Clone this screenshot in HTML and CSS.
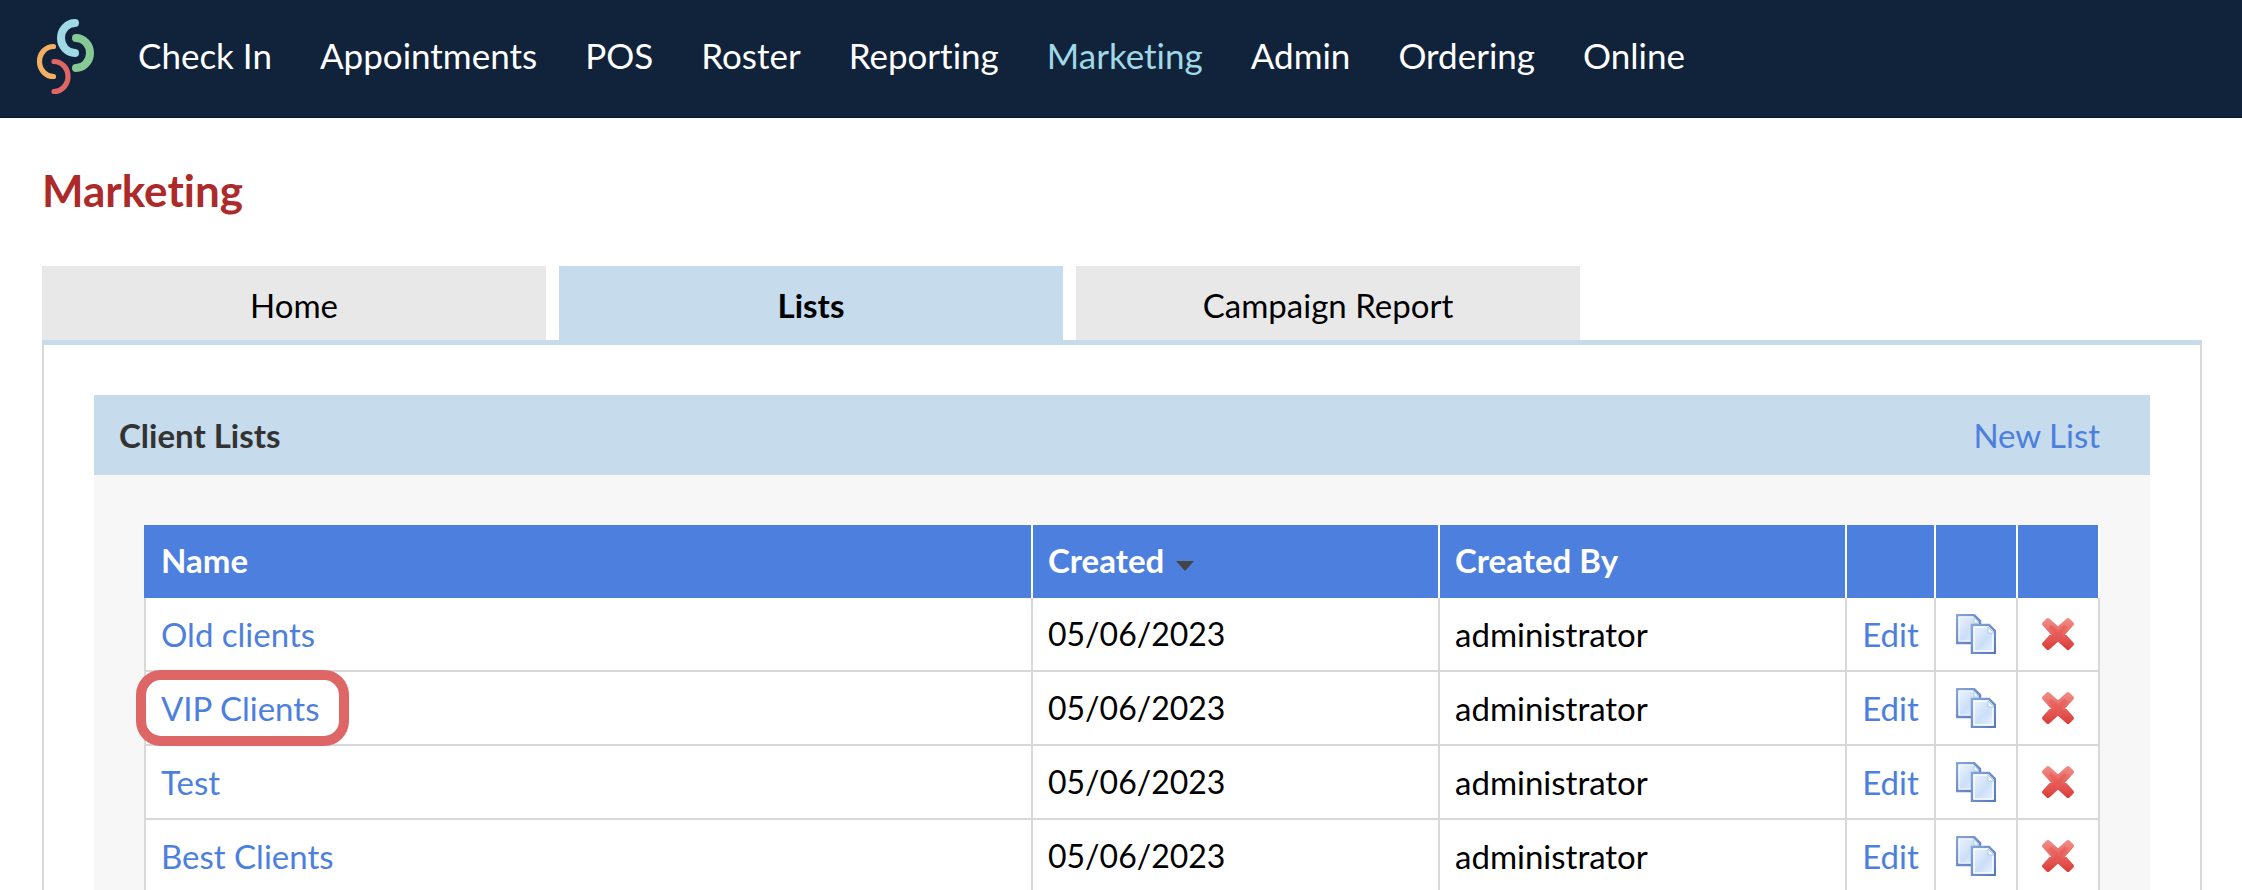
FILE: index.html
```
<!DOCTYPE html>
<html lang="en">
<head>
<meta charset="UTF-8" />
<meta name="viewport" content="width=device-width, initial-scale=1" />
<title>Marketing - Client Lists</title>
<link rel="stylesheet" href="styles.css">
</head>
<body>
  <svg class="sprite" aria-hidden="true">
    <defs>
      <linearGradient id="page-fill" x1="0" y1="0" x2="1" y2="1">
        <stop offset="0" stop-color="#eff5fd" />
        <stop offset="0.55" stop-color="#cbdff8" />
        <stop offset="1" stop-color="#edf4fd" />
      </linearGradient>
      <linearGradient id="page-edge" x1="0" y1="0" x2="1" y2="1">
        <stop offset="0" stop-color="#86a5d8" />
        <stop offset="1" stop-color="#5878bd" />
      </linearGradient>
      <linearGradient id="cross-fill" x1="0" y1="0" x2="0" y2="1">
        <stop offset="0" stop-color="#f08983" />
        <stop offset="1" stop-color="#dc3f3b" />
      </linearGradient>
    </defs>
    <symbol id="icon-copy" viewBox="0 0 40 40">
      <path d="M1 1h17l6 6v22H1z" fill="url(#page-fill)" stroke="url(#page-edge)" stroke-width="2.5" />
      <path d="M3 3h14l5 5v19H3z" fill="none" stroke="#fff" stroke-width="1" opacity=".8" />
      <path d="M18 3v6h5z" fill="#fff" stroke="#a9cbe9" />
      <path d="M16 11h17l6 6v22H16z" fill="url(#page-fill)" stroke="url(#page-edge)" stroke-width="2.5" />
      <path d="M18 13h14l5 5v19H18z" fill="none" stroke="#fff" stroke-width="1.5" opacity=".9" />
      <path d="M32 13v6h6z" fill="#fff" stroke="#a9cbe9" />
    </symbol>
    <symbol id="icon-cross" viewBox="0 0 34 34">
      <path d="M7 3 3 7l9 10-9 10 4 4 10-9 10 9 4-4-9-10 9-10-4-4-10 9z" fill="url(#cross-fill)" stroke="url(#cross-fill)" stroke-width="4" stroke-linejoin="round" />
      <path d="m9 9 16 16M25 9 9 25" stroke="#e9524f" stroke-width="4" opacity=".45" />
    </symbol>
  </svg>

  <header class="topbar">
    <a class="logo" href="#" aria-label="Dashboard">
      <svg viewBox="0 0 60 78" fill="none" stroke-linecap="round">
        <path d="M39 5A14 15 0 0 0 39 35" stroke="#9fd9e6" stroke-width="8" />
        <path d="M40 20A14 15 0 0 1 40 50" stroke="#86c994" stroke-width="8" />
        <path d="M17.500 28.500A14 15 0 0 0 17.500 58.500" stroke="#f4b062" stroke-width="5.200" />
        <path d="M18 43.500A14 15 0 0 1 18 73.500" stroke="#e06666" stroke-width="5.200" />
      </svg>
    </a>
    <nav class="menu">
      <a href="#">Check In</a>
      <a href="#">Appointments</a>
      <a href="#">POS</a>
      <a href="#">Roster</a>
      <a href="#">Reporting</a>
      <a href="#" class="current">Marketing</a>
      <a href="#">Admin</a>
      <a href="#">Ordering</a>
      <a href="#">Online</a>
    </nav>
  </header>

  <main class="content">
    <h1>Marketing</h1>
    <nav class="tabs">
      <a href="#">Home</a>
      <a href="#" class="active">Lists</a>
      <a href="#">Campaign Report</a>
    </nav>
    <div class="tab-body">
      <section class="panel">
        <div class="panel-header">
          <h2>Client Lists</h2>
          <a href="#">New List</a>
        </div>
        <div class="panel-body">
          <table class="lists">
            <colgroup>
              <col>
              <col class="col-info">
              <col class="col-info">
              <col class="col-edit">
              <col class="col-copy">
              <col class="col-delete">
            </colgroup>
            <thead>
              <tr>
                <th>Name</th>
                <th>Created <span class="sort-arrow"></span></th>
                <th>Created By</th>
                <th></th>
                <th></th>
                <th></th>
              </tr>
            </thead>
            <tbody>
              <tr>
                <td><a href="#">Old clients</a></td>
                <td class="date">05/06/2023</td>
                <td>administrator</td>
                <td class="action"><a href="#">Edit</a></td>
                <td class="action"><button aria-label="Copy"><svg class="copy"><use href="#icon-copy" /></svg></button></td>
                <td class="action"><button aria-label="Delete"><svg class="cross"><use href="#icon-cross" /></svg></button></td>
              </tr>
              <tr>
                <td><a href="#" class="highlight">VIP Clients</a></td>
                <td class="date">05/06/2023</td>
                <td>administrator</td>
                <td class="action"><a href="#">Edit</a></td>
                <td class="action"><button aria-label="Copy"><svg class="copy"><use href="#icon-copy" /></svg></button></td>
                <td class="action"><button aria-label="Delete"><svg class="cross"><use href="#icon-cross" /></svg></button></td>
              </tr>
              <tr>
                <td><a href="#">Test</a></td>
                <td class="date">05/06/2023</td>
                <td>administrator</td>
                <td class="action"><a href="#">Edit</a></td>
                <td class="action"><button aria-label="Copy"><svg class="copy"><use href="#icon-copy" /></svg></button></td>
                <td class="action"><button aria-label="Delete"><svg class="cross"><use href="#icon-cross" /></svg></button></td>
              </tr>
              <tr>
                <td><a href="#">Best Clients</a></td>
                <td class="date">05/06/2023</td>
                <td>administrator</td>
                <td class="action"><a href="#">Edit</a></td>
                <td class="action"><button aria-label="Copy"><svg class="copy"><use href="#icon-copy" /></svg></button></td>
                <td class="action"><button aria-label="Delete"><svg class="cross"><use href="#icon-cross" /></svg></button></td>
              </tr>
            </tbody>
          </table>
        </div>
      </section>
    </div>
  </main>
</body>
</html>
```
FILE: styles.css
```
* {
  box-sizing: border-box;
}
html {
  scrollbar-width: none;
}
body {
  margin: 0;
  background: #fff;
  color: #000;
  font-family: Lato, "Liberation Sans", sans-serif;
  font-size: 33px;
  font-variant-ligatures: none;
  line-height: 40px;
}
a {
  color: #4d7fde;
  text-decoration: none;
}
.sprite {
  position: absolute;
  width: 0;
  height: 0;
}

/* top navigation */
.topbar {
  display: flex;
  align-items: flex-start;
  gap: 42px;
  height: 118px;
  padding: 18px 36px 0;
  background: #11223b;
  border-bottom: 1px solid #0a1428;
}
.logo svg {
  display: block;
  width: 60px;
  height: 78px;
}
.menu {
  display: flex;
  gap: 48px;
  padding-top: 17px;
  font-size: 35px;
}
.menu a {
  color: #fff;
  white-space: nowrap;
}
.menu .current {
  color: #9fd9e6;
}

.content {
  padding: 46px 40px 0 42px;
}
h1 {
  margin: 0 0 50px;
  color: #ad2a2a;
  font-size: 44px;
  line-height: 52px;
}

/* tabs */
.tabs {
  display: flex;
  gap: 13px;
}
.tabs a {
  width: 504px;
  height: 74px;
  padding-top: 19px;
  background: #e8e8e8;
  color: #000;
  text-align: center;
}
.tabs .active {
  background: #c6dbeb;
  font-weight: bold;
}
.tab-body {
  padding: 50px;
  border: 2px solid #d8d8d8;
  border-top: 5px solid #c6dbeb;
}

.panel {
  background: #f7f7f7;
}
.panel-header {
  display: flex;
  justify-content: space-between;
  align-items: center;
  height: 80px;
  padding: 0 50px 0 25px;
  background: #c6dbeb;
}
.panel-header h2 {
  margin: 0;
  color: #333;
  font-size: 33px;
}
.panel-body {
  padding: 50px;
}

/* client lists table */
.lists {
  width: 100%;
  table-layout: fixed;
  border-collapse: separate;
  border-spacing: 0;
  background: #fff;
}
.col-info {
  width: 407px;
}
.col-edit {
  width: 89px;
}
.col-copy {
  width: 82px;
}
.col-delete {
  width: 84px;
}
.lists th {
  height: 73px;
  padding: 0 15px 3px;
  background: #4d7fde;
  border-left: 2px solid #fff;
  color: #fff;
  text-align: left;
}
.lists th:first-child {
  border-left-color: #4d7fde;
}
.lists th:last-child {
  border-right: 2px solid #fff;
}
.lists td {
  height: 74px;
  padding: 0 15px 1px;
  border-left: 2px solid #d8d8d8;
  border-bottom: 2px solid #d8d8d8;
}
.lists td:last-child {
  border-right: 2px solid #d8d8d8;
}
.lists .date {
  font-size: 32px;
}
.lists .action {
  padding: 0 0 1px;
  text-align: center;
}
.sort-arrow {
  display: inline-block;
  margin-left: 4px;
  border: 9px solid transparent;
  border-top: 10px solid #444;
  border-bottom: 0;
  vertical-align: 2px;
}
.lists button {
  display: block;
  margin: 0 auto;
  padding: 0;
  background: none;
  border: none;
  cursor: pointer;
}
.lists svg {
  display: block;
}
.copy {
  width: 40px;
  height: 40px;
}
.cross {
  width: 34px;
  height: 34px;
}
.highlight {
  position: relative;
}
.highlight::after {
  content: "";
  position: absolute;
  inset: -18px -30px -18px -25px;
  border: 10px solid #df6666;
  border-radius: 25px;
}
```
